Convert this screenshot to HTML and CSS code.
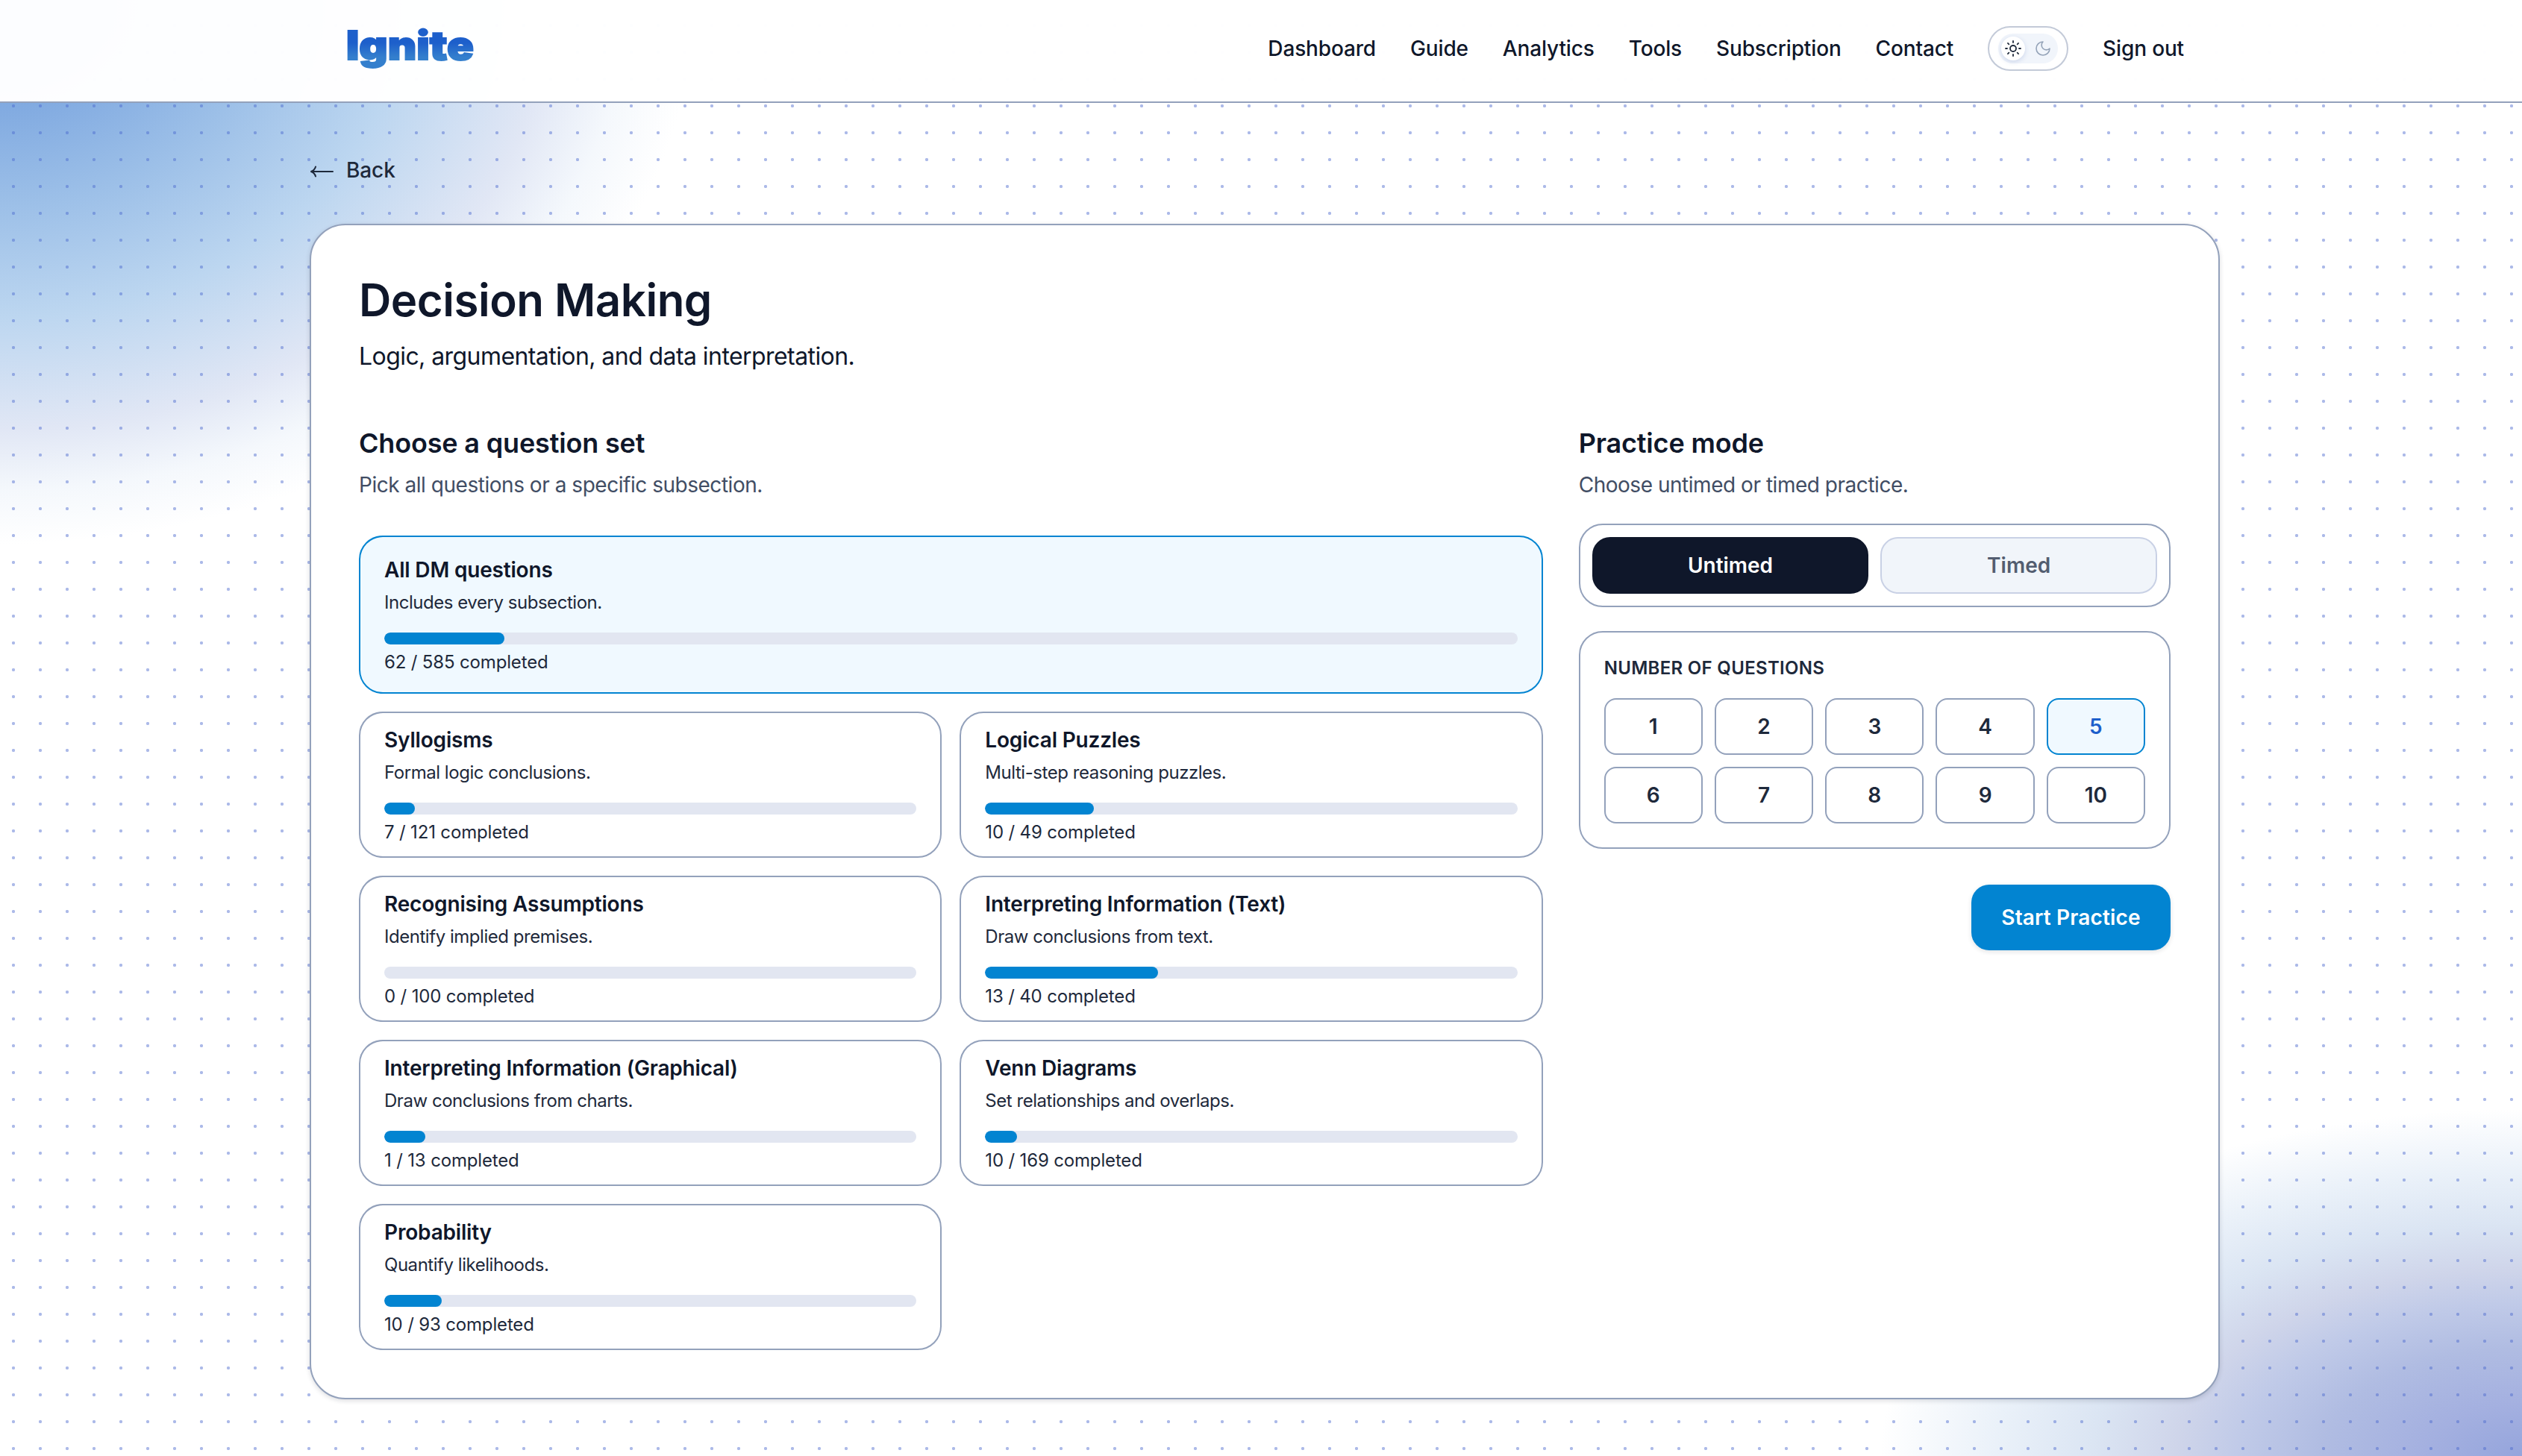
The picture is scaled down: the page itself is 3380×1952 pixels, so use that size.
FILE: index.html
```
<!DOCTYPE html>
<html lang="en">
<head>
    <meta charset="UTF-8">
    <meta name="viewport" content="width=device-width, initial-scale=1.0">
    <title>Ignite - Decision Making</title>
    <link rel="stylesheet" href="styles.css">
</head>
<body>
    <header class="header">
        <a class="logo">Ignite</a>
        <nav class="nav">
            <a>Dashboard</a>
            <a>Guide</a>
            <a>Analytics</a>
            <a>Tools</a>
            <a>Subscription</a>
            <a>Contact</a>
            <button class="theme-toggle" aria-label="Toggle theme">
                <span class="track">
                    <span class="thumb">
                        <svg class="icon sun" viewBox="0 0 24 24"><circle cx="12" cy="12" r="4"/><path d="M12 2v2M12 20v2M4.93 4.93l1.41 1.41M17.66 17.66l1.41 1.41M2 12h2M20 12h2M6.34 17.66l-1.41 1.41M19.07 4.93l-1.41 1.41"/></svg>
                    </span>
                    <span class="side">
                        <svg class="icon moon" viewBox="0 0 24 24"><path d="M12 3a6 6 0 0 0 9 9 9 9 0 1 1-9-9Z"/></svg>
                    </span>
                </span>
            </button>
            <a>Sign out</a>
        </nav>
    </header>

    <main class="page">
        <a class="back">
            <svg class="arrow" viewBox="0 0 32 16"><path d="M31 8H2M8 1.5C7 5 5 7.2 1.5 8 5 8.8 7 11 8 14.5"/></svg>
            <span>Back</span>
        </a>

        <section class="panel">
            <h1>Decision Making</h1>
            <p class="lead">Logic, argumentation, and data interpretation.</p>

            <div class="columns">
                <div>
                    <h2>Choose a question set</h2>
                    <p class="hint">Pick all questions or a specific subsection.</p>
                    <div class="sets">
                        <div class="card active">
                            <h3>All DM questions</h3>
                            <p>Includes every subsection.</p>
                            <div class="bar"><div class="fill" style="width: 10.6%"></div></div>
                            <p class="count">62 / 585 completed</p>
                        </div>
                        <div class="card">
                            <h3>Syllogisms</h3>
                            <p>Formal logic conclusions.</p>
                            <div class="bar"><div class="fill" style="width: 5.79%"></div></div>
                            <p class="count">7 / 121 completed</p>
                        </div>
                        <div class="card">
                            <h3>Logical Puzzles</h3>
                            <p>Multi-step reasoning puzzles.</p>
                            <div class="bar"><div class="fill" style="width: 20.41%"></div></div>
                            <p class="count">10 / 49 completed</p>
                        </div>
                        <div class="card">
                            <h3>Recognising Assumptions</h3>
                            <p>Identify implied premises.</p>
                            <div class="bar"><div class="fill" style="width: 0%"></div></div>
                            <p class="count">0 / 100 completed</p>
                        </div>
                        <div class="card">
                            <h3>Interpreting Information (Text)</h3>
                            <p>Draw conclusions from text.</p>
                            <div class="bar"><div class="fill" style="width: 32.5%"></div></div>
                            <p class="count">13 / 40 completed</p>
                        </div>
                        <div class="card">
                            <h3>Interpreting Information (Graphical)</h3>
                            <p>Draw conclusions from charts.</p>
                            <div class="bar"><div class="fill" style="width: 7.69%"></div></div>
                            <p class="count">1 / 13 completed</p>
                        </div>
                        <div class="card">
                            <h3>Venn Diagrams</h3>
                            <p>Set relationships and overlaps.</p>
                            <div class="bar"><div class="fill" style="width: 5.92%"></div></div>
                            <p class="count">10 / 169 completed</p>
                        </div>
                        <div class="card">
                            <h3>Probability</h3>
                            <p>Quantify likelihoods.</p>
                            <div class="bar"><div class="fill" style="width: 10.75%"></div></div>
                            <p class="count">10 / 93 completed</p>
                        </div>
                    </div>
                </div>

                <div>
                    <h2>Practice mode</h2>
                    <p class="hint">Choose untimed or timed practice.</p>
                    <div class="modes">
                        <button class="mode selected">Untimed</button>
                        <button class="mode">Timed</button>
                    </div>
                    <div class="amount">
                        <p class="label">NUMBER OF QUESTIONS</p>
                        <div class="numbers">
                            <button>1</button>
                            <button>2</button>
                            <button>3</button>
                            <button>4</button>
                            <button class="selected">5</button>
                            <button>6</button>
                            <button>7</button>
                            <button>8</button>
                            <button>9</button>
                            <button>10</button>
                        </div>
                    </div>
                    <div class="actions">
                        <button class="start">Start Practice</button>
                    </div>
                </div>
            </div>
        </section>
    </main>
</body>
</html>
```

FILE: styles.css
```
* {
    box-sizing: border-box;
    margin: 0;
    padding: 0;
}
body {
    min-height: 1952px;
    font-family: Inter, "Liberation Sans", sans-serif;
    font-size: 28px;
    line-height: 40px;
    color: #0f172a;
    background:
        radial-gradient(circle, rgba(72, 102, 205, 0.45) 0, rgba(72, 102, 205, 0.45) 1.8px, transparent 2.5px) 0 16px / 36px 36px,
        radial-gradient(930px 730px at 0 0, #709fdd 0%, #82abe1 20%, #9dc0e8 38%, #bcd6f0 58%, #e1e7f5 79%, rgba(240, 245, 251, 0.7) 90%, rgba(255, 255, 255, 0) 100%),
        radial-gradient(860px 465px at 100% 100%, #95a5dc 0%, #a4b0e0 15%, #b0bce2 31%, #c0cae8 44%, #cfd5ea 54%, #dbe5f3 67%, #eaf1f9 82%, #fff 100%);
}
button {
    font: inherit;
    background: none;
    border: none;
    color: inherit;
}
.header {
    display: flex;
    align-items: center;
    justify-content: space-between;
    height: 138px;
    padding: 0 453px 6px 464px;
    background: rgba(255, 255, 255, 0.98);
    border-bottom: 2px solid #93a1bb;
}
.logo {
    margin-bottom: 9px;
    font-size: 53px;
    font-weight: 900;
    line-height: 72px;
    background: linear-gradient(#1d5fcb 45%, #347fcd 72%);
    -webkit-background-clip: text;
    background-clip: text;
    color: transparent;
    -webkit-text-stroke: 2px transparent;
    transform: scaleX(1.12);
    transform-origin: left;
}
.nav {
    display: flex;
    align-items: center;
    gap: 46px;
    font-weight: 500;
    letter-spacing: -0.15px;
}
.theme-toggle {
    display: flex;
    align-items: center;
    justify-content: center;
    width: 108px;
    height: 60px;
    border: 2px solid #c3cad8;
    border-radius: 30px;
    background: #fff;
}
.track {
    display: flex;
    align-items: center;
    gap: 8px;
    width: 80px;
    height: 40px;
    padding: 0 4px;
    border-radius: 20px;
    background: #f1f5fb;
}
.thumb, .side {
    display: flex;
    align-items: center;
    justify-content: center;
    width: 32px;
    height: 32px;
}
.thumb {
    border-radius: 50%;
    background: #fff;
    box-shadow: 0 2px 6px rgba(60, 90, 170, 0.2);
}
.icon {
    width: 24px;
    height: 24px;
    fill: none;
    stroke-width: 2;
    stroke-linecap: round;
    stroke-linejoin: round;
}
.sun { stroke: #1e293b; stroke-width: 1.8; }
.moon { stroke: #94a3b8; stroke-width: 1.6; }

.page {
    width: 2560px;
    margin-left: 415px;
    padding-top: 70px;
}
.back {
    display: flex;
    align-items: center;
    gap: 17px;
    color: #1e293b;
    font-weight: 500;
    letter-spacing: -0.1px;
}
.arrow {
    width: 32px;
    height: 16px;
    margin-top: 4px;
    fill: none;
    stroke: #1e293b;
    stroke-width: 2;
    stroke-linecap: round;
}
.panel {
    margin-top: 52px;
    padding: 64px;
    border: 2px solid #93a1bb;
    border-radius: 48px;
    background: #fff;
    box-shadow: 0 2px 6px rgba(15, 23, 42, 0.15);
}
h1 {
    font-size: 60px;
    font-weight: 600;
    line-height: 72px;
    letter-spacing: -0.5px;
}
.lead {
    margin-top: 16px;
    font-size: 32px;
    line-height: 48px;
    letter-spacing: -0.57px;
}
.columns {
    display: grid;
    grid-template-columns: 2fr 1fr;
    gap: 48px;
    margin-top: 64px;
}
h2 {
    font-size: 36px;
    font-weight: 600;
    line-height: 56px;
    letter-spacing: -0.17px;
}
.hint {
    margin-top: 8px;
    color: #414d64;
    letter-spacing: -0.47px;
}
.sets {
    display: grid;
    grid-template-columns: 1fr 1fr;
    gap: 24px;
    margin-top: 48px;
}
.card {
    padding: 16px 32px;
    border: 2px solid #93a1bb;
    border-radius: 32px;
    background: #fff;
}
.card.active {
    grid-column: 1 / -1;
    padding: 24px 32px;
    border-color: #0284d1;
    background: #f0f9ff;
}
.card h3 {
    font-size: 28px;
    font-weight: 600;
    line-height: 40px;
    letter-spacing: -0.18px;
}
.card p {
    margin-top: 8px;
    font-size: 24px;
    line-height: 32px;
    letter-spacing: -0.46px;
    color: #1e293b;
}
.card .count {
    letter-spacing: -0.16px;
}
.bar {
    height: 16px;
    margin-top: 24px;
    border-radius: 8px;
    overflow: hidden;
    background: #e2e6f1;
}
.fill {
    height: 100%;
    border-radius: 8px;
    background: #0284d1;
}
.modes {
    display: grid;
    grid-template-columns: 1fr 1fr;
    gap: 16px;
    margin-top: 32px;
    padding: 16px;
    border: 2px solid #93a1bb;
    border-radius: 32px;
}
.mode {
    height: 76px;
    border: 2px solid #c9d1e5;
    border-radius: 24px;
    background: #f1f5fa;
    color: #535d70;
    font-weight: 600;
}
.mode.selected {
    border-color: #0f172a;
    background: #0f172a;
    color: #fff;
}
.amount {
    margin-top: 32px;
    padding: 32px;
    border: 2px solid #93a1bb;
    border-radius: 32px;
}
.label {
    font-size: 24px;
    font-weight: 600;
    line-height: 32px;
    letter-spacing: 0.3px;
    color: #1e293b;
}
.numbers {
    display: grid;
    grid-template-columns: repeat(5, 1fr);
    gap: 16px;
    margin-top: 24px;
}
.numbers button {
    height: 76px;
    border: 2px solid #93a1bb;
    border-radius: 16px;
    color: #1e293b;
    font-weight: 600;
}
.numbers .selected {
    border-color: #0284d1;
    background: #f0f9ff;
    color: #1d5fcb;
}
.actions {
    display: flex;
    justify-content: flex-end;
    margin-top: 48px;
}
.start {
    width: 267px;
    height: 88px;
    border-radius: 24px;
    background: #0284d1;
    color: #fff;
    font-weight: 600;
    letter-spacing: 0.15px;
    box-shadow: 0 2px 6px rgba(15, 23, 42, 0.12);
}
```
